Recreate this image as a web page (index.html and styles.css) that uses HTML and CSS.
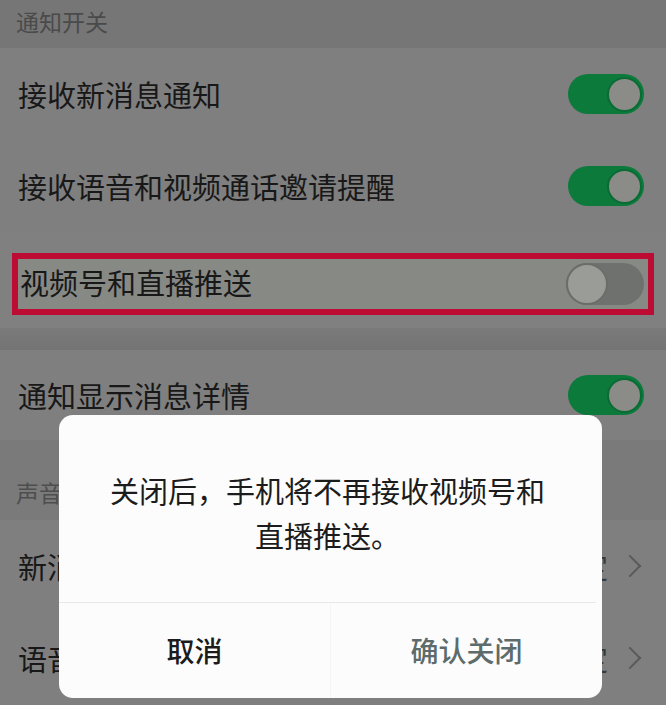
FILE: index.html
```html
<!DOCTYPE html>
<html lang="zh">
<head>
<meta charset="utf-8">
<link rel="stylesheet" href="styles.css">
</head>
<body>
<div class="screen">
  <div class="sec-hdr top">通知开关</div>
  <div class="row"><span class="label">接收新消息通知</span><span class="sw on"><span class="knob"></span></span></div>
  <div class="row"><span class="label">接收语音和视频通话邀请提醒</span><span class="sw on"><span class="knob"></span></span></div>
  <div class="row hl-wrap">
    <div class="hl"><span class="label">视频号和直播推送</span><span class="sw off"><span class="knob"></span></span></div>
  </div>
  <div class="band"></div>
  <div class="row r4"><span class="label">通知显示消息详情</span><span class="sw on"><span class="knob"></span></span></div>
  <div class="sec-hdr second">声音与振动</div>
  <div class="row"><span class="label">新消息提示音</span><span class="value">跟随系统设定</span><span class="chev"></span></div>
  <div class="row"><span class="label">语音和视频通话提示音</span><span class="value">跟随系统设定</span><span class="chev"></span></div>

  <div class="dialog">
    <div class="msg">关闭后，手机将不再接收视频号和<br>直播推送。</div>
    <div class="btns">
      <div class="btn cancel">取消</div>
      <div class="btn confirm">确认关闭</div>
    </div>
  </div>
</div>
</body>
</html>
```
FILE: styles.css
```css
html, body {
  margin: 0;
  padding: 0;
}
body {
  width: 666px;
  height: 705px;
  overflow: hidden;
  background: #7d7d7d;
  font-family: "Noto Sans CJK SC", "Noto Sans", sans-serif;
}
.screen {
  position: relative;
  width: 666px;
  height: 705px;
  display: flex;
  flex-direction: column;
  background: #7f7f7f;
}
.sec-hdr {
  background: #767676;
  color: #4a4a4a;
  font-size: 23px;
  padding-left: 16px;
  box-sizing: border-box;
}
.sec-hdr.top {
  height: 48px;
  line-height: 42px;
}
.sec-hdr.second {
  height: 80px;
  padding-top: 37px;
  line-height: 30px;
  background: #7a7a7a;
  color: #4e4e4e;
}
.row {
  height: 92px;
  flex: none;
  display: flex;
  align-items: center;
  padding: 0 22px 0 18px;
  box-sizing: border-box;
  background: #7f7f7f;
}
.label {
  font-size: 29px;
  color: #181818;
  flex: 1;
  white-space: nowrap;
}
.sw {
  width: 76px;
  height: 40px;
  border-radius: 20px;
  box-sizing: border-box;
  display: flex;
  align-items: center;
  flex: none;
}
.sw.on {
  background: #0b7a3b;
  justify-content: flex-end;
  padding-right: 2px;
}
.sw.on .knob {
  width: 35px;
  height: 35px;
  border-radius: 50%;
  background: #8b8c88;
  border: 2px solid #0a6b34;
  box-sizing: border-box;
}
.hl-wrap {
  height: 96px;
  padding: 21px 12px 13px 12px;
  align-items: stretch;
  background: #808080;
}
.hl {
  flex: 1;
  display: flex;
  align-items: center;
  border: 6px solid #bd0c34;
  background: #878985;
  padding: 0 4px 0 2px;
}
.hl .label {
  margin-top: -4px;
}
.sw.off {
  background: #6f716e;
  width: 78px;
  height: 42px;
  border-radius: 21px;
  padding-left: 0;
}
.sw.off .knob {
  width: 42px;
  height: 42px;
  border-radius: 50%;
  background: #9a9c98;
  border: 2px solid #6b6d69;
  box-sizing: border-box;
}
.band {
  height: 22px;
  flex: none;
  background: linear-gradient(#7a7a7a, #747474);
}
.r4 {
  height: 90px;
}
.value {
  font-size: 29px;
  color: #3a3a3a;
  margin-right: 14px;
  white-space: nowrap;
}
.chev {
  width: 14px;
  height: 14px;
  border-top: 2px solid #5a5a5a;
  border-right: 2px solid #5a5a5a;
  transform: rotate(45deg);
  margin-right: 6px;
  flex: none;
}
.dialog {
  position: absolute;
  left: 59px;
  top: 415px;
  width: 543px;
  height: 283px;
  background: #fcfcfc;
  border-radius: 14px;
  display: flex;
  flex-direction: column;
}
.msg {
  padding-top: 53px;
  height: 188px;
  box-sizing: border-box;
  text-align: center;
  font-size: 29px;
  line-height: 45px;
  color: #1c1c1c;
  border-bottom: 1px solid #e8e8e8;
  margin: 0 6px 0 0;
}
.btns {
  flex: 1;
  display: flex;
}
.btn {
  flex: 1;
  display: flex;
  align-items: center;
  justify-content: center;
  font-size: 28px;
  font-weight: 500;
  padding-bottom: 2px;
}
.cancel {
  color: #1c1c1c;
  border-right: 1px solid #f5f5f5;
}
.confirm {
  color: #5d6b6b;
}
```
